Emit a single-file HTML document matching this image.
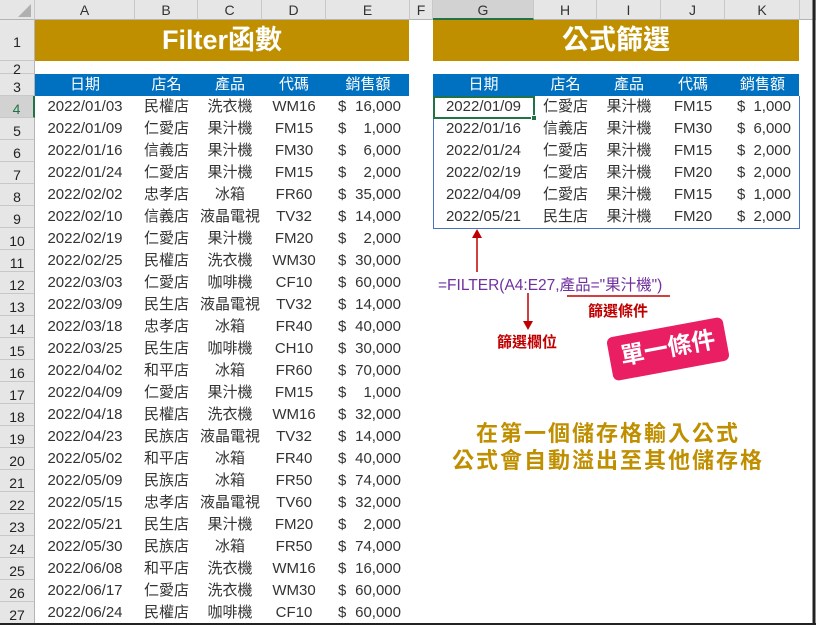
<!DOCTYPE html>
<html><head><meta charset="utf-8"><style>
*{margin:0;padding:0;box-sizing:border-box}
body{width:816px;height:625px;overflow:hidden;background:#fff;position:relative;font-family:"Liberation Sans","Noto Sans CJK TC",sans-serif;}
.a{position:absolute}
.ch{position:absolute;top:0;height:20px;background:#e6e6e6;border-right:1px solid #c8c8c8;border-bottom:1px solid #b4b4b4;font-size:14px;color:#333;text-align:center;line-height:20px}
.rh{position:absolute;left:0;width:35px;background:#e6e6e6;border-bottom:1px solid #c8c8c8;border-right:1px solid #b4b4b4;font-size:14px;color:#222;text-align:center}
.c{position:absolute;height:22px;line-height:22px;font-size:15px;color:#333;text-align:center;white-space:nowrap}
.h{color:#fff}
</style></head><body>
<div class="ch" style="left:0;width:35px"><svg width="35" height="20"><polygon points="31,4 31,17 18,17" fill="#b0b0b0"/></svg></div>
<div class="ch" style="left:35px;width:100px">A</div>
<div class="ch" style="left:135px;width:63px">B</div>
<div class="ch" style="left:198px;width:64px">C</div>
<div class="ch" style="left:262px;width:64px">D</div>
<div class="ch" style="left:326px;width:84px">E</div>
<div class="ch" style="left:410px;width:23px">F</div>
<div class="ch" style="left:433px;width:101px;background:#d2d2d2;border-bottom:2px solid #217346">G</div>
<div class="ch" style="left:534px;width:63px">H</div>
<div class="ch" style="left:597px;width:64px">I</div>
<div class="ch" style="left:661px;width:64px">J</div>
<div class="ch" style="left:725px;width:75px">K</div>
<div class="ch" style="left:800px;width:16px"></div>
<div id="rows"></div>
<div class="a" style="left:35px;top:20px;width:374px;height:41px;background:#bf8f00;color:#fff;font-size:27px;font-weight:bold;text-align:center;line-height:41px">Filter函數</div>
<div class="a" style="left:433px;top:20px;width:366px;height:41px;background:#bf8f00;color:#fff;font-size:27px;font-weight:bold;text-align:center;line-height:41px">公式篩選</div>
<div class="a" style="left:35px;top:74px;width:374px;height:22px;background:#0070c0"></div>
<div class="a" style="left:433px;top:74px;width:366px;height:22px;background:#0070c0"></div>
<div class="a" style="left:433px;top:96px;width:367px;height:133px;border:1px solid #4472c4;border-top:none"></div>
<div class="a" style="left:433px;top:96px;width:102px;height:23px;border:2px solid #217346"></div>
<div class="a" style="left:531px;top:115px;width:6px;height:6px;background:#217346;border:1px solid #fff"></div>
<div id="cells"></div>
<svg class="a" style="left:0;top:0" width="816" height="625">
<line x1="477" y1="272" x2="477" y2="236" stroke="#c00000" stroke-width="1.5"/><polygon points="472,238 482,238 477,229" fill="#c00000"/>
<line x1="528" y1="293" x2="528" y2="322" stroke="#c00000" stroke-width="1.5"/><polygon points="523,321 533,321 528,330" fill="#c00000"/>
<line x1="567" y1="296" x2="670" y2="296" stroke="#c00000" stroke-width="1.5"/>
<line x1="814" y1="0" x2="814" y2="625" stroke="#222" stroke-width="3"/>
<line x1="0" y1="624" x2="816" y2="624" stroke="#222" stroke-width="2"/>
</svg>
<div class="a" style="left:438px;top:273px;font-size:15.5px;color:#7030a0;white-space:nowrap">=FILTER(A4:E27,產品="果汁機")</div>
<div class="a" style="left:588px;top:300px;font-size:15px;font-weight:bold;color:#c00000">篩選條件</div>
<div class="a" style="left:497px;top:331px;font-size:15px;font-weight:bold;color:#c00000">篩選欄位</div>
<div class="a" style="left:609px;top:327px;width:118px;height:44px;background:#e91e63;border-radius:6px;transform:rotate(-10.5deg);color:#fff;font-size:24px;font-weight:bold;text-align:center;line-height:44px">單一條件</div>
<div class="a" style="left:400px;top:420px;width:416px;text-align:center;font-size:22px;letter-spacing:2px;font-weight:bold;color:#bf8f00;line-height:27px">在第一個儲存格輸入公式<br>公式會自動溢出至其他儲存格</div>
<script>
var rows=document.getElementById('rows'),h='';
function rh(n,t,ht,sel){h+='<div class="rh" style="top:'+t+'px;height:'+ht+'px;line-height:'+(ht+4)+'px;'+(sel?'background:#d2d2d2;border-right:2px solid #217346;color:#217346':'')+'">'+n+'</div>';}
rh(1,20,41);rh(2,61,13);rh(3,74,22);
for(var i=4;i<=27;i++)rh(i,96+(i-4)*22,22,i==4);
rows.innerHTML=h;
var L=[["2022/01/03","民權店","洗衣機","WM16","16,000"],["2022/01/09","仁愛店","果汁機","FM15","1,000"],["2022/01/16","信義店","果汁機","FM30","6,000"],["2022/01/24","仁愛店","果汁機","FM15","2,000"],["2022/02/02","忠孝店","冰箱","FR60","35,000"],["2022/02/10","信義店","液晶電視","TV32","14,000"],["2022/02/19","仁愛店","果汁機","FM20","2,000"],["2022/02/25","民權店","洗衣機","WM30","30,000"],["2022/03/03","仁愛店","咖啡機","CF10","60,000"],["2022/03/09","民生店","液晶電視","TV32","14,000"],["2022/03/18","忠孝店","冰箱","FR40","40,000"],["2022/03/25","民生店","咖啡機","CH10","30,000"],["2022/04/02","和平店","冰箱","FR60","70,000"],["2022/04/09","仁愛店","果汁機","FM15","1,000"],["2022/04/18","民權店","洗衣機","WM16","32,000"],["2022/04/23","民族店","液晶電視","TV32","14,000"],["2022/05/02","和平店","冰箱","FR40","40,000"],["2022/05/09","民族店","冰箱","FR50","74,000"],["2022/05/15","忠孝店","液晶電視","TV60","32,000"],["2022/05/21","民生店","果汁機","FM20","2,000"],["2022/05/30","民族店","冰箱","FR50","74,000"],["2022/06/08","和平店","洗衣機","WM16","16,000"],["2022/06/17","仁愛店","洗衣機","WM30","60,000"],["2022/06/24","民權店","咖啡機","CF10","60,000"]];
var R=[["2022/01/09","仁愛店","果汁機","FM15","1,000"],["2022/01/16","信義店","果汁機","FM30","6,000"],["2022/01/24","仁愛店","果汁機","FM15","2,000"],["2022/02/19","仁愛店","果汁機","FM20","2,000"],["2022/04/09","仁愛店","果汁機","FM15","1,000"],["2022/05/21","民生店","果汁機","FM20","2,000"]];
var hd=["日期","店名","產品","代碼","銷售額"];
var cl=[[35,100],[135,63],[198,64],[262,64],[326,84]],cr=[[433,101],[534,63],[597,64],[661,64],[725,75]];
var c='';
function cell(x,w,y,t,cls){c+='<div class="c '+(cls||'')+'" style="left:'+x+'px;width:'+w+'px;top:'+y+'px">'+t+'</div>';}
for(var k=0;k<5;k++){cell(cl[k][0],cl[k][1],74,hd[k],'h');cell(cr[k][0],cr[k][1],74,hd[k],'h');}
function tbl(D,C,dx){for(var r=0;r<D.length;r++){var y=96+r*22;for(var k=0;k<4;k++)cell(C[k][0],C[k][1],y,D[r][k]);
c+='<div class="c" style="left:'+(C[4][0]+dx)+'px;top:'+y+'px">$</div>';
c+='<div class="c" style="left:'+C[4][0]+'px;width:'+(C[4][1]-9)+'px;text-align:right;top:'+y+'px">'+D[r][4]+'</div>';}}
tbl(L,cl,12);tbl(R,cr,12);
document.getElementById('cells').innerHTML=c;
</script>
</body></html>
